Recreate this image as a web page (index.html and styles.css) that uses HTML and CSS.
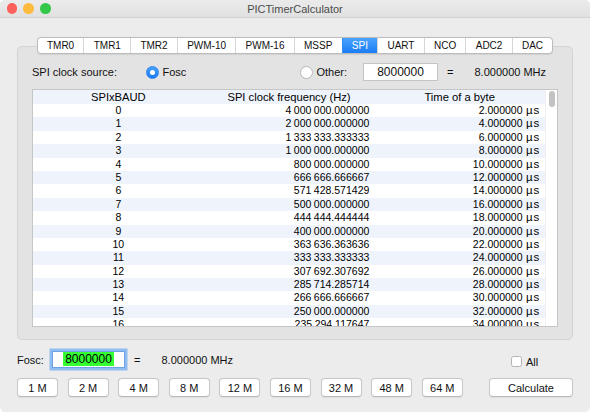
FILE: index.html
```html
<!DOCTYPE html>
<html lang="en">
<head>
	<meta charset="UTF-8">
	<title>PICTimerCalculator</title>
	<link rel="stylesheet" href="styles.css">
</head>
<body>
<div class="window">
	<div class="titlebar">
		<div class="lights">
			<span class="light red"></span>
			<span class="light yellow"></span>
			<span class="light green"></span>
		</div>
		<div class="title">PICTimerCalculator</div>
	</div>

	<div class="tabwidget">
		<div class="tabs">
			<div class="tab-strip">
				<div class="tab">TMR0</div>
				<div class="tab">TMR1</div>
				<div class="tab">TMR2</div>
				<div class="tab">PWM-10</div>
				<div class="tab">PWM-16</div>
				<div class="tab">MSSP</div>
				<div class="tab active">SPI</div>
				<div class="tab">UART</div>
				<div class="tab">NCO</div>
				<div class="tab">ADC2</div>
				<div class="tab">DAC</div>
			</div>
		</div>

		<div class="panel">
			<div class="source-row">
				<span class="source-label">SPI clock source:</span>
				<span class="choice choice-fosc"><span class="radio checked"></span>Fosc</span>
				<span class="choice choice-other"><span class="radio"></span>Other:</span>
				<div class="field other-field">8000000</div>
				<span class="eq">=</span>
				<span class="freq">8.000000 MHz</span>
			</div>

			<div class="table">
				<div class="table-view">
					<div class="row head">
						<div class="cell">SPIxBAUD</div>
						<div class="cell">SPI clock frequency (Hz)</div>
						<div class="cell">Time of a byte</div>
					</div>
					<div id="rows"></div>
				</div>
				<div class="scrollbar"><div class="thumb"></div></div>
			</div>
		</div>
	</div>

	<div class="bottom">
		<div class="fosc-row">
			<span class="fosc-label">Fosc:</span>
			<div class="field fosc-field"><span class="selected">8000000</span></div>
			<span class="eq">=</span>
			<span class="freq">8.000000 MHz</span>
		</div>
		<div class="all-row">
			<span class="checkbox"></span>All
		</div>
		<div class="presets">
			<button type="button" class="btn">1 M</button>
			<button type="button" class="btn">2 M</button>
			<button type="button" class="btn">4 M</button>
			<button type="button" class="btn">8 M</button>
			<button type="button" class="btn">12 M</button>
			<button type="button" class="btn">16 M</button>
			<button type="button" class="btn">32 M</button>
			<button type="button" class="btn">48 M</button>
			<button type="button" class="btn">64 M</button>
		</div>
		<button type="button" class="btn calc">Calculate</button>
	</div>
</div>

<script>
	// SPI clock = Fosc / (2 * (SPIxBAUD + 1)), byte = 8 clocks
	const fosc = 8000000;
	const rows = document.getElementById('rows');

	function group(s) {
		return s.replace(/\B(?=(\d{3})+(?!\d))/g, ' ');
	}

	for (let i = 0; i <= 16; i++) {
		const freq = fosc / (2 * (i + 1));
		const parts = freq.toFixed(6).split('.');
		const time = (8 / freq * 1e6).toFixed(6);

		const row = document.createElement('div');
		row.classList.add('row');
		if (i % 2 === 1) row.classList.add('alt');
		row.innerHTML =
			`<div class="cell">${i}</div>` +
			`<div class="cell num">${group(parts[0])}.${parts[1]}</div>` +
			`<div class="cell num">${time} <span class="unit">µs</span></div>`;
		rows.appendChild(row);
	}
</script>
</body>
</html>
```

FILE: styles.css
```css
body {
	margin: 0;
	background: #fff;
	font-family: "Liberation Sans", Arial, sans-serif;
	font-size: 11px;
	color: #111;
}
.window {
	width: 590px;
	height: 412px;
	background: #ececec;
	border-radius: 5px;
	overflow: hidden;
}

/* title bar */
.titlebar {
	height: 17px;
	display: grid;
	grid-template-columns: 1fr auto 1fr;
	align-items: center;
	background: linear-gradient(#ebebeb, #e1e1e1);
	border-bottom: 1px solid #d2d2d2;
}
.lights {
	display: flex;
	gap: 6.2px;
	padding-left: 6.7px;
}
.light {
	width: 10.5px;
	height: 10.5px;
	border-radius: 50%;
}
.red { background: #fc605c; }
.yellow { background: #fdbc40; }
.green { background: #34c84a; }
.title {
	color: #4c4c4c;
	font-size: 11px;
}

/* tabs */
.tabwidget {
	margin: 19px 17px 0;
}
.tabs {
	display: flex;
	justify-content: center;
	position: relative;
	z-index: 1;
}
.tab-strip {
	display: flex;
	background: #fff;
	border: 1px solid #bcbcbc;
	border-radius: 4px;
	overflow: hidden;
	box-shadow: 0 0.5px 1px rgba(0, 0, 0, 0.08);
}
.tab {
	height: 15px;
	line-height: 15px;
	padding: 0 9.25px;
	font-size: 10px;
	color: #111;
	border-left: 1px solid #d6d6d6;
}
.tab:first-child {
	border-left: none;
}
.tab.active {
	background: linear-gradient(#4aa3fd, #1b7cf5);
	border-left-color: #2f8cf8;
	color: #fff;
}
.panel {
	margin-top: -8px;
	background: #e3e3e3;
	border: 1px solid #d3d3d3;
	border-radius: 5px;
	padding: 16px 14px 12px;
}

/* clock source row */
.source-row {
	display: flex;
	align-items: center;
	height: 18px;
}
.source-label {
	width: 114px;
}
.choice {
	display: flex;
	align-items: center;
	gap: 3.5px;
}
.choice-fosc {
	width: 154px;
}
.choice-other {
	width: 63px;
}
.radio {
	width: 13px;
	height: 13px;
	box-sizing: border-box;
	border-radius: 50%;
	background: #fff;
	border: 1px solid #b8b8b8;
	display: flex;
	align-items: center;
	justify-content: center;
}
.radio.checked {
	background: linear-gradient(#48a1fd, #1a7af3);
	border-color: #2a86f5;
}
.radio.checked::after {
	content: "";
	width: 5px;
	height: 5px;
	border-radius: 50%;
	background: #fff;
}
.field {
	box-sizing: border-box;
	background: #fff;
	font-size: 12px;
	text-align: center;
}
.other-field {
	width: 75px;
	height: 18px;
	line-height: 16px;
	border: 1px solid #c4c4c4;
}
.eq {
	width: 27.5px;
	margin-left: 9px;
}

/* table */
.table {
	display: flex;
	height: 238px;
	box-sizing: border-box;
	margin-top: 8px;
	background: #fff;
	border: 1px solid #c6c6c6;
}
.table-view {
	flex: 1;
	overflow: hidden;
}
.row {
	display: grid;
	grid-template-columns: 1fr 1fr 1fr;
	height: 13.4px;
	line-height: 13.4px;
	font-size: 10.5px;
	color: #000;
	white-space: nowrap;
}
.row.head {
	height: 14px;
	line-height: 14px;
	font-size: 11.2px;
	background: #eff4fc;
}
.row.alt {
	background: #eff4fc;
}
.cell {
	text-align: center;
}
.cell.num {
	text-align: right;
	padding-right: 5px;
	word-spacing: -0.4px;
}
.unit {
	margin-left: 1px;
	font-size: 11.5px;
	letter-spacing: 0.8px;
}
.scrollbar {
	width: 11px;
	border-left: 1px solid #f0f0f0;
}
.thumb {
	width: 6px;
	height: 16px;
	margin: 1px 0 0 3px;
	border-radius: 3px;
	background: #c3c3c3;
}

/* bottom controls */
.bottom {
	display: grid;
	grid-template-columns: 1fr 84px;
	grid-template-rows: 23px 19px;
	row-gap: 7px;
	margin: 8px 17px 0;
}
.fosc-row {
	display: flex;
	align-items: center;
}
.fosc-label {
	width: 35px;
}
.fosc-field {
	width: 73px;
	height: 17px;
	line-height: 13px;
	border: 1px solid #6fa2e4;
	box-shadow: 0 0 0 2.5px #8fbcf1;
	padding-top: 1px;
}
.selected {
	background: #33ff33;
	padding: 0 2px;
	color: #000;
}
.fosc-row .eq {
	margin-left: 9px;
}
.all-row {
	display: flex;
	align-items: center;
	gap: 4px;
	padding: 4px 0 0 22px;
}
.checkbox {
	width: 11px;
	height: 11px;
	box-sizing: border-box;
	background: #fff;
	border: 1px solid #b4b4b4;
	border-radius: 2.5px;
}
.presets {
	display: flex;
	gap: 9.6px;
}
.btn {
	width: 41px;
	height: 19px;
	box-sizing: border-box;
	padding: 0;
	background: #fff;
	border: 1px solid #c8c8c8;
	border-bottom-color: #b9b9b9;
	border-radius: 4px;
	font-family: inherit;
	font-size: 11px;
	color: #111;
	box-shadow: 0 0.5px 1px rgba(0, 0, 0, 0.06);
}
.btn.calc {
	width: 84px;
}
```
